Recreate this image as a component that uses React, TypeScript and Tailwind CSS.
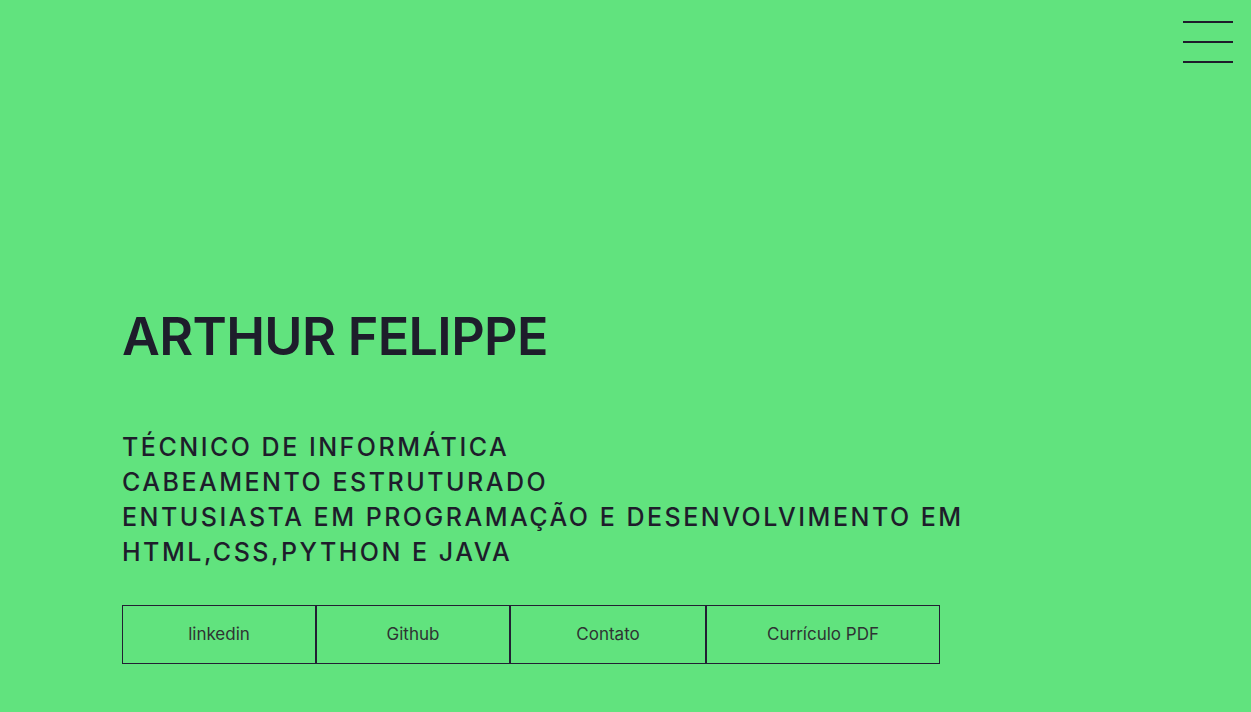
import React from "react";

export default function App() {
  const links = [
    { label: "linkedin", w: "w-[194px]" },
    { label: "Github", w: "w-[194px]" },
    { label: "Contato", w: "w-[196px]" },
    { label: "Currículo PDF", w: "w-[234px]" },
  ];
  return (
    <div
      className="relative h-[712px] w-full overflow-hidden bg-[#61e37e] text-[#1e1d2b]"
      style={{ fontFamily: "Inter, 'Noto Sans', sans-serif" }}
    >
      <button className="absolute right-[18px] top-[21px] flex w-[50px] flex-col gap-[18px]">
        <span className="block h-[2px] w-full bg-[#1e1d2b]" />
        <span className="block h-[2px] w-full bg-[#1e1d2b]" />
        <span className="block h-[2px] w-full bg-[#1e1d2b]" />
      </button>
      <div className="flex flex-col pl-[122px] pt-[304px]">
        <h1 className="text-[52px] font-semibold leading-[66px] tracking-[-0.012em]">ARTHUR FELIPPE</h1>
        <div className="mt-[60px] text-[25px] font-medium leading-[35px] tracking-[0.1em]">
          <p>TÉCNICO DE INFORMÁTICA</p>
          <p>CABEAMENTO ESTRUTURADO</p>
          <p>ENTUSIASTA EM PROGRAMAÇÃO E DESENVOLVIMENTO EM</p>
          <p>HTML,CSS,PYTHON E JAVA</p>
        </div>
        <div className="mt-[35px] flex">
          {links.map((l) => (
            <a
              key={l.label}
              className={`flex h-[59px] ${l.w} items-center justify-center border border-[#221f33] text-[17px] text-[#2e3333]`}
            >
              {l.label}
            </a>
          ))}
        </div>
      </div>
    </div>
  );
}
